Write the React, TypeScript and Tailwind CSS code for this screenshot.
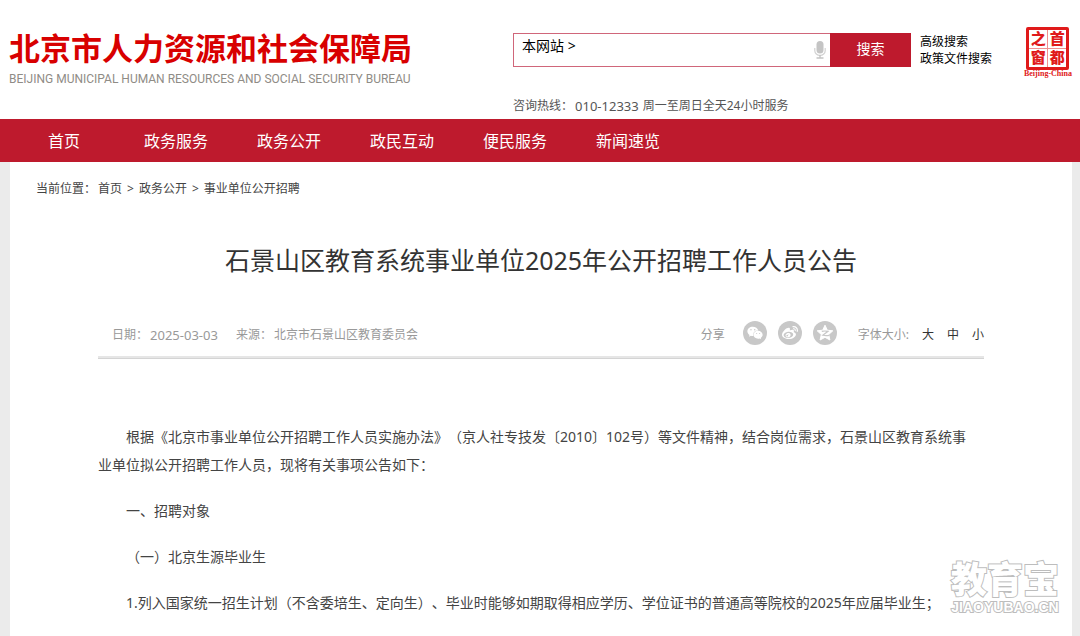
import { useState } from 'react';
import { FaWeibo, FaWeixin } from 'react-icons/fa';

const NAV_ITEMS = ['政务服务', '政务公开', '政民互动', '便民服务', '新闻速览'];

const PARAGRAPHS = [
  '根据《北京市事业单位公开招聘工作人员实施办法》（京人社专技发〔2010〕102号）等文件精神，结合岗位需求，石景山区教育系统事业单位拟公开招聘工作人员，现将有关事项公告如下：',
  '一、招聘对象',
  '（一）北京生源毕业生',
  '1.列入国家统一招生计划（不含委培生、定向生）、毕业时能够如期取得相应学历、学位证书的普通高等院校的2025年应届毕业生；',
];

function MicIcon() {
  return (
    <svg viewBox="0 0 12 18" className="h-[18px] w-3" aria-hidden="true">
      <rect x="2.5" y="0" width="7" height="12.5" rx="3.5" fill="#c4c4c4" />
      <path d="M.8 7v2.8a5.2 4.6 0 0 0 10.4 0V7" fill="none" stroke="#d2d2d2" strokeWidth="1.2" />
      <path d="M6 14v2.5M2.5 17h7" stroke="#c4c4c4" strokeWidth="1.4" />
    </svg>
  );
}

function QzoneIcon() {
  return (
    <svg viewBox="0 0 18 18" className="size-[18px]" aria-hidden="true">
      <path
        d="M9 1.2l2.3 5 5.5.6-4.1 3.7 1.2 5.5L9 13.3 4.1 16l1.2-5.5L1.2 6.8l5.5-.6z"
        fill="#fff"
        stroke="#fff"
        strokeLinejoin="round"
      />
      <path d="M5.8 7.3c2-.4 4-.4 6.2 0L6.8 11.2c2 .5 4 .5 6.6.1" fill="none" stroke="#c8c8c8" strokeWidth="1.2" />
    </svg>
  );
}

// 首都之窗 seal
function Seal() {
  return (
    <a href="#" className="mt-[27px] flex flex-col items-center text-[#e01a1a]">
      <span className="grid size-[43px] grid-cols-2 grid-rows-2 rounded-xs border-[3px] border-[#e01a1a] font-['Liberation_Sans','Noto_Sans_CJK_SC',sans-serif] text-[15px] leading-[17px] font-black">
        <span className="border-r border-b border-[#f09090] text-center">之</span>
        <span className="border-b border-[#f09090] text-center">首</span>
        <span className="border-r border-[#f09090] text-center">窗</span>
        <span className="text-center">都</span>
      </span>
      <span className="font-['Liberation_Serif',serif] text-[8px] leading-2 font-bold">Beijing-China</span>
    </a>
  );
}

function Header() {
  const [keyword, setKeyword] = useState('');

  return (
    <header className="flex h-[119px] items-start bg-white pr-2 pl-[9px]">
      <a href="#" className="mt-8 w-[504px] shrink-0 whitespace-nowrap">
        <h1 className="text-[31px] leading-8 font-bold text-[#d80000]">北京市人力资源和社会保障局</h1>
        <p className="mt-[7px] font-['Roboto',sans-serif] text-xs text-[#8f8c86]">
          BEIJING MUNICIPAL HUMAN RESOURCES AND SOCIAL SECURITY BUREAU
        </p>
      </a>

      <div className="mt-[33px] w-[398px] shrink-0">
        <form className="flex h-[34px] border border-[#d0667a]" onSubmit={(e) => e.preventDefault()}>
          <button type="button" className="h-6 px-2 text-sm text-black">
            本网站 &gt;
          </button>
          <input
            type="text"
            aria-label="搜索关键词"
            value={keyword}
            onChange={(e) => setKeyword(e.target.value)}
            className="min-w-0 flex-1 outline-none"
          />
          <button type="button" aria-label="语音搜索" className="px-1">
            <MicIcon />
          </button>
          <button type="submit" className="-my-px -mr-px w-[81px] bg-[#be1a2d] pb-[2px] text-sm text-white">
            搜索
          </button>
        </form>
        <p className="mt-[29px] flex text-xs leading-5 text-[#555]">
          <span className="mr-[2px]">咨询热线：</span>
          <span className="mr-1 text-[13px] leading-5">010-12333</span>
          <span>周一至周日全天24小时服务</span>
        </p>
      </div>

      <div className="mt-[33px] ml-[9px] flex flex-col text-xs leading-[17px] text-black">
        <a href="#">高级搜索</a>
        <a href="#">政策文件搜索</a>
      </div>

      <div className="ml-auto">
        <Seal />
      </div>
    </header>
  );
}

function Watermark() {
  return (
    <div className="pointer-events-none absolute top-[561px] right-5 flex w-[110px] flex-col items-center font-['Liberation_Sans','Noto_Sans_CJK_SC',sans-serif] text-white [paint-order:stroke_fill] [-webkit-text-stroke:2px_#bdbdbd]">
      <span className="text-[36px] leading-[40px] font-black">教育宝</span>
      <span className="text-[14px] leading-3 font-bold">JIAOYUBAO.CN</span>
    </div>
  );
}

export default function App() {
  return (
    <div className="relative flex min-h-screen flex-col bg-[#ebebeb] font-['Noto_Sans','Noto_Sans_CJK_SC',sans-serif] [text-spacing-trim:space-all]">
      <Header />

      <nav className="flex h-[43px] items-center gap-[49px] bg-[#be1a2d] pl-12 text-base text-white">
        <a href="#" className="mr-[15px]">首页</a>
        {NAV_ITEMS.map((item) => (
          <a key={item} href="#">{item}</a>
        ))}
      </nav>

      <main className="mr-2 ml-[10px] flex-1 bg-white pb-4">
        <div className="flex pt-[17px] pl-[26px] text-xs leading-5 text-[#444]">
          <span className="mr-[2px]">当前位置：</span>
          <a href="#">首页</a>
          <span className="mx-[5px]">&gt;</span>
          <a href="#">政务公开</a>
          <span className="mx-[5px]">&gt;</span>
          <a href="#">事业单位公开招聘</a>
        </div>

        <article className="mx-[88px]">
          <h2 className="mt-[45px] text-center text-[25px] leading-8 text-[#333]">
            石景山区教育系统事业单位2025年公开招聘工作人员公告
          </h2>

          <div className="mt-[45px] flex items-end border-b-2 border-[#e6e6e6] pb-[11px] pl-[14px] text-xs leading-5 text-[#999] shadow-[0_1px_0_#d4d4d4]">
            <span className="mr-[2px]">日期：</span>
            <span className="mr-[18px] text-[13px] leading-5">2025-03-03</span>
            <span className="mr-[2px]">来源：</span>
            <span>北京市石景山区教育委员会</span>

            <span className="mr-[18px] ml-auto">分享</span>
            <div className="mr-[21px] flex gap-[11px] text-white">
              <button type="button" aria-label="微信" className="flex size-6 items-center justify-center rounded-full bg-[#c8c8c8]">
                <FaWeixin size={16} />
              </button>
              <button type="button" aria-label="微博" className="flex size-6 items-center justify-center rounded-full bg-[#c8c8c8]">
                <FaWeibo size={16} />
              </button>
              <button type="button" aria-label="QQ空间" className="flex size-6 items-center justify-center rounded-full bg-[#c8c8c8]">
                <QzoneIcon />
              </button>
            </div>
            <span>字体大小:</span>
            <div className="ml-[13px] flex gap-[13px] text-[#333]">
              <button type="button">大</button>
              <button type="button">中</button>
              <button type="button">小</button>
            </div>
          </div>

          <div className="mt-[65px] flex flex-col gap-[18px] pr-[10px] text-sm leading-7 text-[#444]">
            {PARAGRAPHS.map((text) => (
              <p key={text} className="indent-7">{text}</p>
            ))}
          </div>
        </article>
      </main>

      <Watermark />
    </div>
  );
}
